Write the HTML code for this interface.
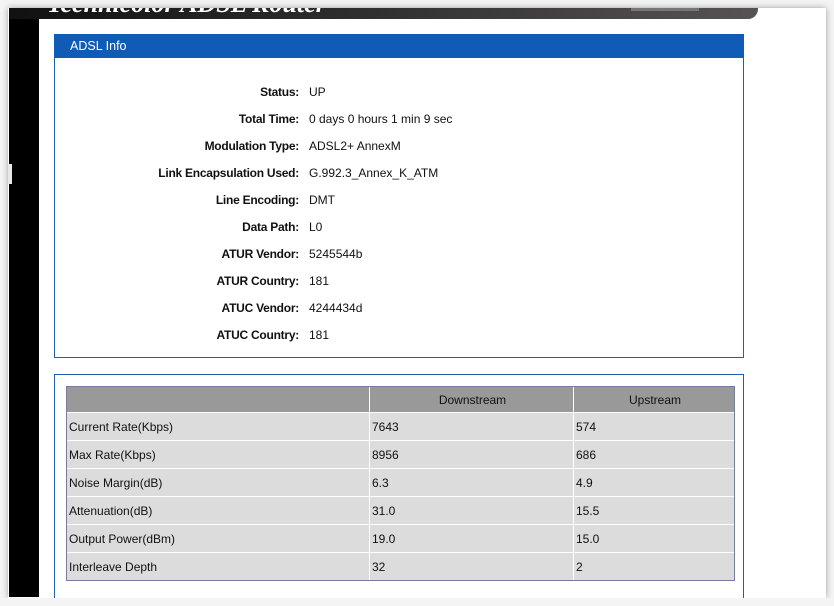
<!DOCTYPE html>
<html><head><style>
html,body{margin:0;width:834px;height:606px;overflow:hidden}
body{background:#f4f4f4;position:relative;font-family:"Liberation Sans",Arial,sans-serif;font-size:12px;color:#111}
.frame{position:absolute;left:8px;top:8px;width:818px;height:590px;background:#fff;box-shadow:0 0 6px rgba(0,0,0,.35)}
.black{position:absolute;left:9px;top:8px;width:30px;height:589px;background:#000}
.notch{position:absolute;left:8px;top:164px;width:4px;height:20px;background:#e8e8e8}
.bar{position:absolute;left:9px;top:8px;width:749px;height:11px;background:linear-gradient(90deg,#111,#2a2a2a 40%,#4a4546 80%,#575253);border-bottom-right-radius:10px;overflow:hidden}
.bar .g{position:absolute;left:622px;top:0;width:68px;height:3px;background:#777}
.bar .t{position:absolute;left:38px;top:-19px;color:#fff;font:bold italic 26px "Liberation Serif",serif;white-space:nowrap}
.corner{position:absolute;left:39px;top:19px;width:20px;height:20px;background:#fff;border-top-left-radius:12px}
.box1{position:absolute;left:54px;top:34px;width:688px;height:323px;border:1px solid #1f5fb0;border-top:none}
.hdr{position:absolute;left:54px;top:34px;width:690px;height:24px;background:#105bb5;color:#fff;font-size:12.5px;line-height:25px}
.hdr span{padding-left:16px}
.row{position:absolute;left:54px;width:690px;height:16px;line-height:16px}
.row b{position:absolute;right:445px;text-align:right;white-space:nowrap;letter-spacing:-0.25px}
.row i{position:absolute;left:255px;font-style:normal}
.box2{position:absolute;left:54px;top:374px;width:688px;height:223px;border:1px solid #1f5fb0;border-bottom:none}
table{position:absolute;left:66px;top:386px;width:669px;border-collapse:separate;border-spacing:0;border:1px solid #7a7a9a}
td{height:27px;background:#dcdcdc;border-right:1px solid #fff;border-bottom:1px solid #fff;padding:0 0 0 2px;font-size:12px;line-height:14px}
td:last-child{border-right:none}
tr:last-child td{border-bottom:none}
tr.h td{background:#999;text-align:center;height:25px}
.cover{position:absolute;left:0;top:598px;width:834px;height:8px;background:#f4f4f4}
</style></head><body>
<div class="frame"></div>
<div class="black"></div>
<div class="notch"></div>
<div class="bar"><div class="t">Technicolor ADSL Router</div><div class="g"></div></div>
<div class="corner"></div>
<div class="box1"></div>
<div class="hdr"><span>ADSL Info</span></div>
<div class="row" style="top:84px"><b>Status:</b><i>UP</i></div>
<div class="row" style="top:111px"><b>Total Time:</b><i>0 days 0 hours 1 min 9 sec</i></div>
<div class="row" style="top:138px"><b>Modulation Type:</b><i>ADSL2+ AnnexM</i></div>
<div class="row" style="top:165px"><b>Link Encapsulation Used:</b><i>G.992.3_Annex_K_ATM</i></div>
<div class="row" style="top:192px"><b>Line Encoding:</b><i>DMT</i></div>
<div class="row" style="top:219px"><b>Data Path:</b><i>L0</i></div>
<div class="row" style="top:246px"><b>ATUR Vendor:</b><i>5245544b</i></div>
<div class="row" style="top:273px"><b>ATUR Country:</b><i>181</i></div>
<div class="row" style="top:300px"><b>ATUC Vendor:</b><i>4244434d</i></div>
<div class="row" style="top:327px"><b>ATUC Country:</b><i>181</i></div>
<div class="box2"></div>
<table>
<tr class="h"><td style="width:300px"></td><td style="width:201px">Downstream</td><td>Upstream</td></tr>
<tr><td>Current Rate(Kbps)</td><td>7643</td><td>574</td></tr>
<tr><td>Max Rate(Kbps)</td><td>8956</td><td>686</td></tr>
<tr><td>Noise Margin(dB)</td><td>6.3</td><td>4.9</td></tr>
<tr><td>Attenuation(dB)</td><td>31.0</td><td>15.5</td></tr>
<tr><td>Output Power(dBm)</td><td>19.0</td><td>15.0</td></tr>
<tr><td>Interleave Depth</td><td>32</td><td>2</td></tr>
</table>
<div class="cover"></div>
</body></html>
